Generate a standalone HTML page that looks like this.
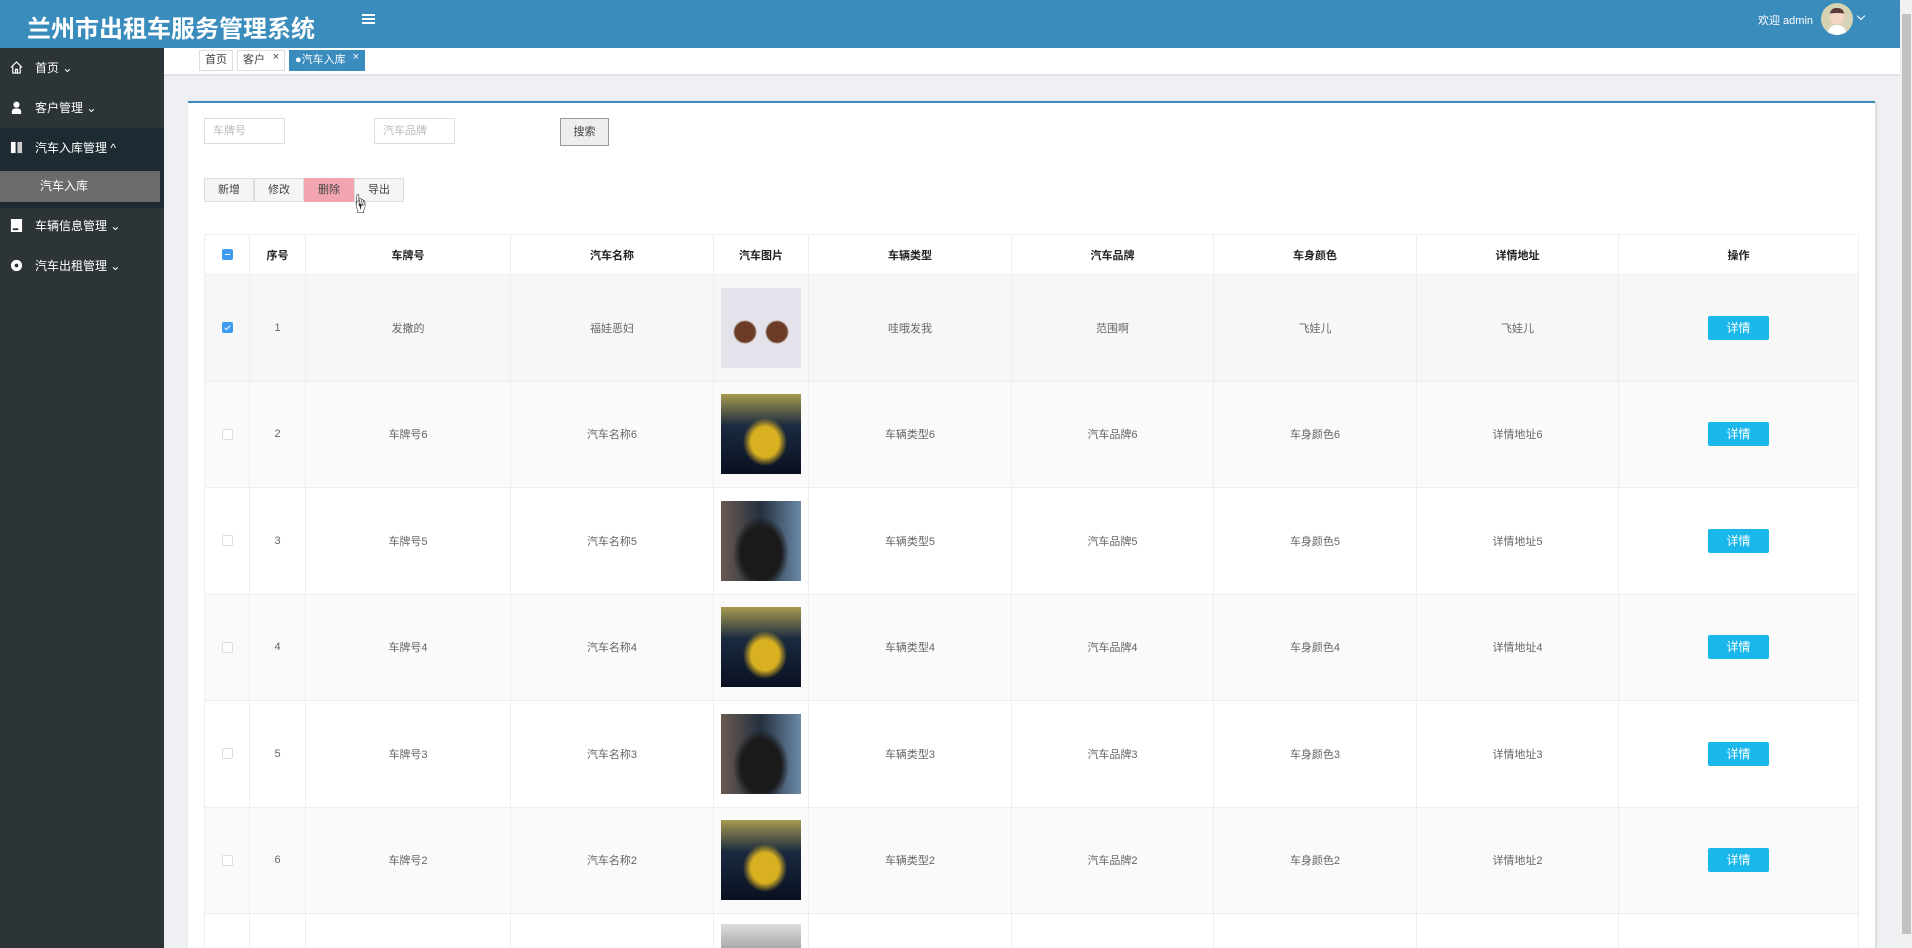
<!DOCTYPE html>
<html style="overflow:hidden;height:948px"><head><meta charset="utf-8"><style>
*{box-sizing:border-box;margin:0;padding:0}
html,body{width:1912px;height:948px;overflow:hidden}
body{background:#eef0f4;font-family:"Liberation Sans","Noto Sans CJK SC",sans-serif;font-size:12px;color:#555}
#wrap{position:relative;width:1912px;height:948px;overflow:hidden}
.hdr{position:absolute;left:0;top:0;width:1900px;height:48px;background:#3a8cbd;color:#fff}
.title{position:absolute;left:27px;top:9px;font-size:24px;font-weight:bold}
.side{position:absolute;left:0;top:48px;width:164px;height:900px;background:#2d3438;color:#fff}
.mi{position:absolute;left:0;width:164px;height:40px;line-height:40px;padding-left:35px;font-size:12px}
.ic{position:absolute;left:10px;top:13px;width:13px;height:13px}
.tabs{position:absolute;left:164px;top:48px;width:1736px;height:28px;background:#fff;border-bottom:2px solid #dfe2e6}
.tab{position:absolute;top:2px;height:21px;line-height:19px;border:1px solid #ddd;font-size:11px;padding:0 5px;color:#444;background:#fff}
.card{position:absolute;left:188px;top:101px;width:1687px;height:847px;background:#fff;border-top:2px solid #3a8cbd;box-shadow:1px 1px 3px #ccc}
.inp{position:absolute;top:118px;width:81px;height:26px;border:1px solid #ddd;color:#bbb;font-size:11px;line-height:24px;padding-left:8px}
.btn{position:absolute;top:178px;width:50px;height:24px;border:1px solid #ddd;background:#f5f5f5;text-align:center;line-height:22px;color:#444;font-size:11px}
#tw{position:absolute;left:204px;top:234px;width:1656px;height:714px;overflow:hidden}
table{border-collapse:collapse;width:1654px;table-layout:fixed}
td,th{border:1px solid #eee;text-align:center;font-size:11px}
th{height:40px;color:#222;font-weight:bold;background:#fff}
td{height:106.5px;color:#666}
tr.a td{background:#f7f7f7}tr.b td{background:#fafafa}
.cb{display:inline-block;width:11px;height:11px;border:1px solid #ddd;border-radius:2px;background:#fff;vertical-align:middle;position:relative}
.cb.on{background:#3d9cf0;border-color:#3d9cf0}
.img{width:80px;height:80px;margin:0 auto}
.dt{display:inline-block;width:61px;height:24px;line-height:24px;background:#1ab7ea;color:#fff;border-radius:2px;font-size:12px}
</style></head><body><div id="wrap">
<div class="hdr"><div class="title">兰州市出租车服务管理系统</div>
<div style="position:absolute;left:362px;top:14px;width:13px;height:2px;background:#fff;box-shadow:0 4px 0 #fff,0 8px 0 #fff"></div>
<div style="position:absolute;left:1758px;top:12px;font-size:11px">欢迎 admin</div>
<div style="position:absolute;left:1821px;top:3px;width:32px;height:32px;border-radius:50%;background:#d6d2b4;overflow:hidden"><div style="position:absolute;left:9px;top:5px;width:14px;height:16px;border-radius:6px;background:#f3d5c5;border-top:5px solid #5a3a3a"></div><div style="position:absolute;left:7px;top:22px;width:18px;height:10px;background:#fff;border-radius:8px 8px 0 0"></div></div>
<div style="position:absolute;left:1858px;top:13px;width:6px;height:6px;border-right:1px solid #fff;border-bottom:1px solid #fff;transform:rotate(45deg)"></div>
</div>
<div style="position:absolute;left:1900px;top:0;width:12px;height:948px;background:#f1f1f1"><div style="position:absolute;left:2px;top:14px;width:9px;height:920px;background:#c1c1c1"></div></div>
<div class="side">
<div class="mi" style="top:0">首页 ⌄<svg class="ic" viewBox="0 0 14 14"><path d="M1 7L7 1l6 6M3 6v7h8V6M6 13V9h2v4" fill="none" stroke="#fff" stroke-width="1.3"/></svg></div>
<div class="mi" style="top:40px">客户管理 ⌄<svg class="ic" viewBox="0 0 14 14"><circle cx="7" cy="4" r="3.3" fill="#fff"/><path d="M2 14v-3q0-3 5-3t5 3v3z" fill="#fff"/></svg></div>
<div class="mi" style="top:80px;background:#1f2b33">汽车入库管理 ^<svg class="ic" viewBox="0 0 14 14"><rect x="1" y="1" width="5" height="12" fill="#fff"/><rect x="8" y="1" width="5" height="12" fill="#ccc"/></svg></div>
<div style="position:absolute;top:120px;left:0;width:164px;height:40px;background:#1f2b33"></div>
<div style="position:absolute;top:123px;left:0;width:160px;height:31px;background:#6b6b6b;color:#fff;line-height:31px;padding-left:40px">汽车入库</div>
<div class="mi" style="top:158px">车辆信息管理 ⌄<svg class="ic" viewBox="0 0 14 14"><rect x="1" y="0" width="12" height="14" fill="#fff"/><rect x="3" y="10" width="6" height="2" fill="#2d3438"/></svg></div>
<div class="mi" style="top:198px">汽车出租管理 ⌄<svg class="ic" viewBox="0 0 14 14"><circle cx="7" cy="7" r="6" fill="#fff"/><circle cx="7" cy="7" r="2" fill="#2d3438"/></svg></div>
</div>
<div class="tabs">
<div class="tab" style="left:35px">首页</div>
<div class="tab" style="left:73px;width:48px">客户 <span style="position:absolute;right:5px;top:-3px">×</span></div>
<div class="tab" style="left:125px;width:76px;background:#3a8cbd;color:#fff;border-color:#3a8cbd">●汽车入库 <span style="position:absolute;right:5px;top:-3px">×</span></div>
</div>
<div class="card"></div>
<div class="inp" style="left:204px">车牌号</div>
<div class="inp" style="left:374px">汽车品牌</div>
<div style="position:absolute;left:560px;top:118px;width:49px;height:28px;border:1px solid #999;background:#eee;text-align:center;line-height:26px;font-size:11px;color:#444">搜索</div>
<div class="btn" style="left:204px">新增</div>
<div class="btn" style="left:254px">修改</div>
<div class="btn" style="left:304px;background:#f2a5b0;border-color:#eaa">删除</div>
<div class="btn" style="left:354px">导出</div>
<div style="position:absolute;left:350px;top:188px;font-size:20px;color:#222">☝</div>
<div id="tw"><table>
<colgroup><col style="width:45px"><col style="width:56px"><col style="width:205px"><col style="width:203px"><col style="width:95px"><col style="width:203px"><col style="width:202px"><col style="width:203px"><col style="width:202px"><col style="width:240px"></colgroup>
<tr><th><span class="cb on"><span style="position:absolute;left:2px;top:4px;width:5px;height:1px;background:#fff"></span></span></th><th>序号</th><th>车牌号</th><th>汽车名称</th><th>汽车图片</th><th>车辆类型</th><th>汽车品牌</th><th>车身颜色</th><th>详情地址</th><th>操作</th></tr>
<tr class="a"><td><span class="cb on"><span style="position:absolute;left:3px;top:1px;width:3px;height:6px;border-right:1px solid #fff;border-bottom:1px solid #fff;transform:rotate(45deg)"></span></span></td><td>1</td><td>发撒的</td><td>福娃恶妇</td><td><div class="img" style="background:radial-gradient(circle at 30% 55%,#6b3b25 10px,transparent 12px),radial-gradient(circle at 70% 55%,#6b3b25 10px,transparent 12px),#e4e2ea"></div></td><td>哇哦发我</td><td>范围啊</td><td>飞娃儿</td><td>飞娃儿</td><td><span class="dt">详情</span></td></tr>
<tr class="b"><td><span class="cb"></span></td><td>2</td><td>车牌号6</td><td>汽车名称6</td><td><div class="img" style="background:radial-gradient(ellipse at 55% 60%,#d8b020 14px,transparent 22px),linear-gradient(#a89a50,#1a2a40 40%,#0a1020)"></div></td><td>车辆类型6</td><td>汽车品牌6</td><td>车身颜色6</td><td>详情地址6</td><td><span class="dt">详情</span></td></tr>
<tr><td><span class="cb"></span></td><td>3</td><td>车牌号5</td><td>汽车名称5</td><td><div class="img" style="background:radial-gradient(ellipse at 50% 65%,#1a1a1a 20px,transparent 28px),linear-gradient(90deg,#6a5a50,#253040 50%,#6c8aa8)"></div></td><td>车辆类型5</td><td>汽车品牌5</td><td>车身颜色5</td><td>详情地址5</td><td><span class="dt">详情</span></td></tr>
<tr class="b"><td><span class="cb"></span></td><td>4</td><td>车牌号4</td><td>汽车名称4</td><td><div class="img" style="background:radial-gradient(ellipse at 55% 60%,#d8b020 14px,transparent 22px),linear-gradient(#a89a50,#1a2a40 40%,#0a1020)"></div></td><td>车辆类型4</td><td>汽车品牌4</td><td>车身颜色4</td><td>详情地址4</td><td><span class="dt">详情</span></td></tr>
<tr><td><span class="cb"></span></td><td>5</td><td>车牌号3</td><td>汽车名称3</td><td><div class="img" style="background:radial-gradient(ellipse at 50% 65%,#1a1a1a 20px,transparent 28px),linear-gradient(90deg,#6a5a50,#253040 50%,#6c8aa8)"></div></td><td>车辆类型3</td><td>汽车品牌3</td><td>车身颜色3</td><td>详情地址3</td><td><span class="dt">详情</span></td></tr>
<tr class="b"><td><span class="cb"></span></td><td>6</td><td>车牌号2</td><td>汽车名称2</td><td><div class="img" style="background:radial-gradient(ellipse at 55% 60%,#d8b020 14px,transparent 22px),linear-gradient(#a89a50,#1a2a40 40%,#0a1020)"></div></td><td>车辆类型2</td><td>汽车品牌2</td><td>车身颜色2</td><td>详情地址2</td><td><span class="dt">详情</span></td></tr>
<tr><td></td><td></td><td></td><td></td><td style="vertical-align:top;padding-top:10px"><div class="img" style="background:linear-gradient(#ddd,#999 40%,#8a2030 60%,#ccc)"></div></td><td></td><td></td><td></td><td></td><td></td></tr>
</table></div>
</div></body></html>
